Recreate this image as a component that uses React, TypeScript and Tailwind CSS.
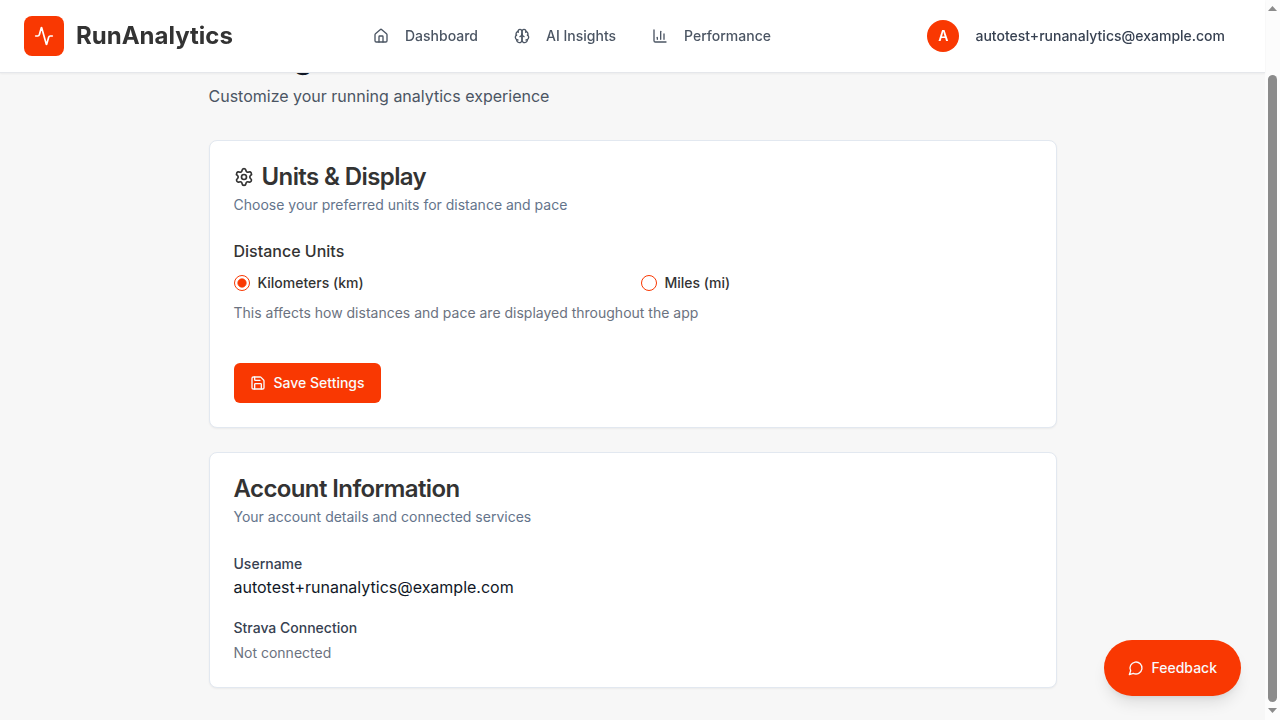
import type { ReactNode } from 'react';
import { Activity, House, Save, Settings } from 'lucide-react';

function BrainIcon() {
  return (
    <svg className="h-4 w-4" viewBox="0 0 24 24" fill="none" stroke="currentColor" strokeWidth="2" strokeLinecap="round" strokeLinejoin="round">
      <path d="M12 5a3 3 0 1 0-5.997.125 4 4 0 0 0-2.526 5.77 4 4 0 0 0 .556 6.588A4 4 0 1 0 12 18Z" />
      <path d="M12 5a3 3 0 1 1 5.997.125 4 4 0 0 1 2.526 5.77 4 4 0 0 1-.556 6.588A4 4 0 1 1 12 18Z" />
      <path d="M15 13a4.5 4.5 0 0 1-3-4 4.5 4.5 0 0 1-3 4" />
      <path d="M17.599 6.5a3 3 0 0 0 .399-1.375" />
      <path d="M6.003 5.125A3 3 0 0 0 6.401 6.5" />
      <path d="M3.477 10.896a4 4 0 0 1 .585-.396" />
      <path d="M19.938 10.5a4 4 0 0 1 .585.396" />
      <path d="M6 18a4 4 0 0 1-1.967-.516" />
      <path d="M19.967 17.484A4 4 0 0 1 18 18" />
    </svg>
  );
}

function ChartIcon() {
  return (
    <svg className="h-4 w-4" viewBox="0 0 24 24" fill="none" stroke="currentColor" strokeWidth="2" strokeLinecap="round" strokeLinejoin="round">
      <path d="M3 3v16a2 2 0 0 0 2 2h16" />
      <path d="M18 17V9" />
      <path d="M13 17V5" />
      <path d="M8 17v-3" />
    </svg>
  );
}

function MessageIcon() {
  return (
    <svg className="h-4 w-4" viewBox="0 0 24 24" fill="none" stroke="currentColor" strokeWidth="2" strokeLinecap="round" strokeLinejoin="round">
      <path d="M7.9 20A9 9 0 1 0 4 16.1L2 22Z" />
    </svg>
  );
}

function NavItem({ icon, label }: { icon: ReactNode; label: string }) {
  return (
    <a className="flex items-center gap-4 text-sm font-medium text-[#4b5563]">
      {icon}
      <span>{label}</span>
    </a>
  );
}

function Header() {
  return (
    <header className="sticky top-0 z-10 flex h-[73px] shrink-0 items-center justify-between border-b border-[#e5e7eb] bg-white pr-10 pb-px pl-6 shadow-xs will-change-transform">
      <div className="flex w-[349px] items-center gap-3">
        <div className="flex h-10 w-10 items-center justify-center rounded-lg bg-[#f93802] text-white">
          <Activity className="h-5 w-5" />
        </div>
        <span className="text-2xl font-bold text-[#333333]">RunAnalytics</span>
      </div>
      <nav className="mr-auto flex items-center gap-9">
        <NavItem icon={<House className="h-4 w-4" />} label="Dashboard" />
        <NavItem icon={<BrainIcon />} label="AI Insights" />
        <NavItem icon={<ChartIcon />} label="Performance" />
      </nav>
      <div className="flex items-center gap-4">
        <div className="flex h-8 w-8 items-center justify-center rounded-full bg-[#f93802] text-sm font-semibold text-white">A</div>
        <span className="text-sm font-medium text-[#374151]">autotest+runanalytics@example.com</span>
      </div>
    </header>
  );
}

function Card({ title, icon, description, children }: { title: string; icon?: ReactNode; description: string; children: ReactNode }) {
  return (
    <section className="rounded-lg border border-[#e2e8f0] bg-white shadow-xs">
      <div className="flex flex-col gap-1.5 p-6">
        <h2 className="flex items-center gap-2 text-2xl leading-none font-semibold tracking-tight text-[#333333]">
          {icon}
          {title}
        </h2>
        <p className="text-sm text-[#64748b]">{description}</p>
      </div>
      <div className="px-6 pb-6">{children}</div>
    </section>
  );
}

function RadioOption({ label, checked }: { label: string; checked?: boolean }) {
  return (
    <div className="flex items-center gap-2">
      <span className="flex h-4 w-4 items-center justify-center rounded-full border border-[#f93802] text-[#f93802]">
        {checked && (
          <svg className="h-2.5 w-2.5" viewBox="0 0 24 24" fill="currentColor" stroke="currentColor" strokeWidth="2">
            <circle cx="12" cy="12" r="10" />
          </svg>
        )}
      </span>
      <span className="text-sm leading-none font-medium text-[#333333]">{label}</span>
    </div>
  );
}

function Scrollbar() {
  return (
    <div className="flex w-[15px] shrink-0 flex-col items-center bg-[#fcfcfc] text-[#8b8b8b]">
      <svg className="mt-1.5 h-[5px] w-[9px]" viewBox="0 0 9 5" fill="currentColor">
        <path d="M4.5 0L9 5H0Z" />
      </svg>
      <div className="mt-16 h-[627px] w-[9px] rounded-full bg-[#8b8b8b]" />
      <svg className="mt-1.5 h-[5px] w-[9px]" viewBox="0 0 9 5" fill="currentColor">
        <path d="M0 0H9L4.5 5Z" />
      </svg>
    </div>
  );
}

export default function App() {
  return (
    <div className="flex h-[720px] w-[1280px] overflow-hidden bg-[#f7f7f7] font-['Inter',sans-serif]">
      <div className="relative flex w-[1265px] shrink-0 flex-col">
        <Header />
        <main className="mx-auto -mt-[33px] w-[896px] px-6">
          <h1 className="text-3xl font-bold text-[#111827]">Settings</h1>
          <p className="mt-2 text-base text-[#4b5563]">Customize your running analytics experience</p>
          <div className="mt-8 flex flex-col gap-6">
            <Card title="Units &amp; Display" icon={<Settings className="h-5 w-5" />} description="Choose your preferred units for distance and pace">
              <h3 className="text-base font-medium text-[#333333]">Distance Units</h3>
              <div className="mt-3 grid grid-cols-2 gap-4">
                <RadioOption label="Kilometers (km)" checked />
                <RadioOption label="Miles (mi)" />
              </div>
              <p className="mt-3 text-sm text-[#6b7280]">This affects how distances and pace are displayed throughout the app</p>
              <button className="mt-10 flex h-10 items-center gap-2 rounded-md bg-[#f93802] px-4 text-sm font-medium text-[#f8fafc]">
                <Save className="h-4 w-4" />
                Save Settings
              </button>
            </Card>
            <Card title="Account Information" description="Your account details and connected services">
              <div className="flex flex-col gap-4">
                <div>
                  <div>
                    <span className="text-sm font-medium text-[#374151]">Username</span>
                  </div>
                  <p className="text-[#111827]">autotest+runanalytics@example.com</p>
                </div>
                <div>
                  <div>
                    <span className="text-sm font-medium text-[#374151]">Strava Connection</span>
                  </div>
                  <p className="mt-1 text-sm text-[#6b7280]">Not connected</p>
                </div>
              </div>
            </Card>
          </div>
        </main>
        <button className="absolute right-6 bottom-6 z-20 flex h-14 items-center gap-2 rounded-full bg-[#f93802] px-6 text-sm font-medium text-[#f8fafc] shadow-lg">
          <MessageIcon />
          Feedback
        </button>
      </div>
      <Scrollbar />
    </div>
  );
}
